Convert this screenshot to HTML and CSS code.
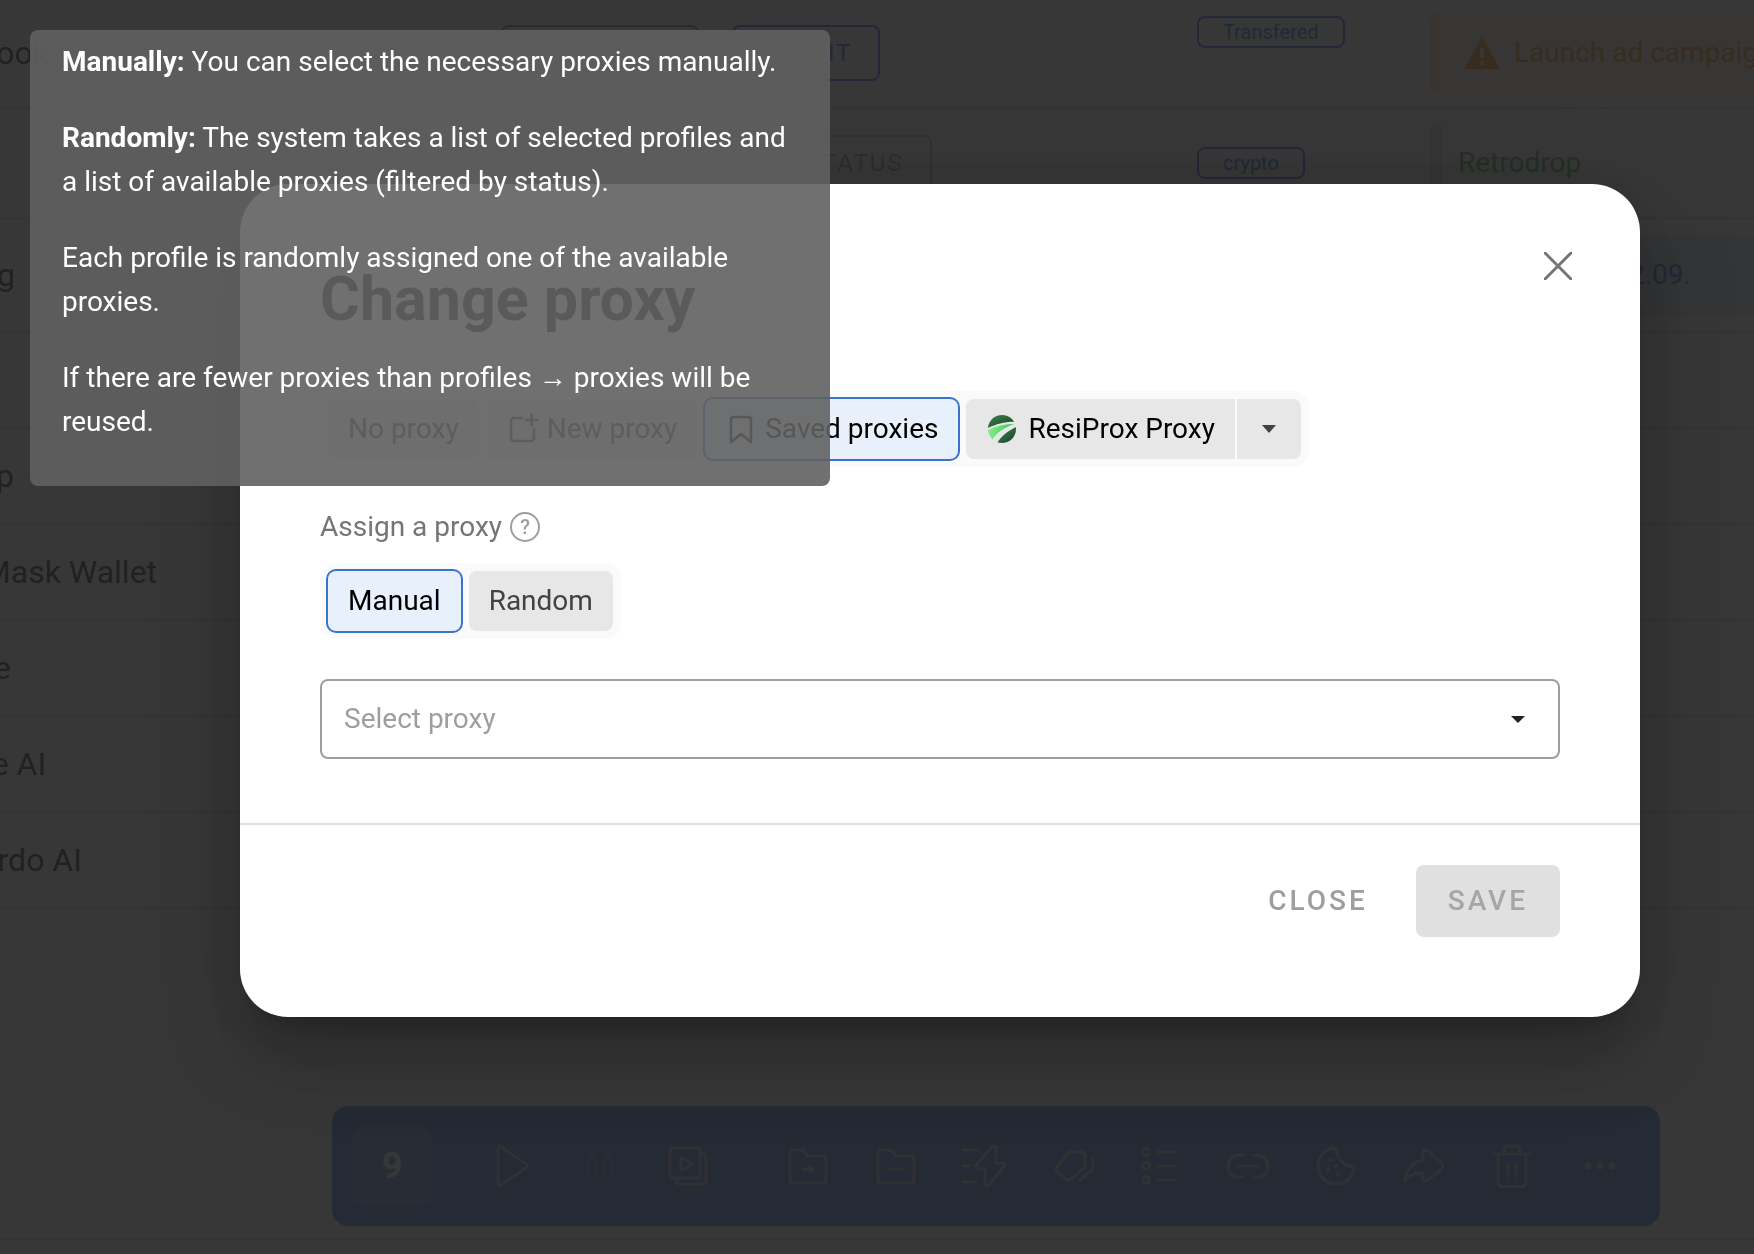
FILE: index.html
```html
<!DOCTYPE html>
<html lang="en">
<head>
    <meta charset="UTF-8">
    <title>Change proxy</title>
    <meta name="viewport" content="width=device-width, initial-scale=1">
    <link rel="stylesheet" href="styles.css">
</head>
<body>
    <div class="page">
        <main class="profiles">
            <table class="profiles-table">
                <colgroup>
                    <col class="col-name">
                    <col class="col-action">
                    <col class="col-status">
                    <col class="col-tags">
                    <col class="col-note">
                </colgroup>
                <tbody>
                    <tr class="row-note">
                        <td>Facebook</td>
                        <td><button class="action action-start"><svg viewBox="0 0 16 20"><path d="M2 2v16l12-8z"/></svg>START</button></td>
                        <td><button class="action action-blue">REDDIT</button></td>
                        <td class="tags-top"><span class="chip">Transfered</span></td>
                        <td>
                            <div class="note note-orange">
                                <svg class="note-icon" viewBox="0 0 36 32"><path fill-rule="evenodd" d="M18 0 36 32H0zM16 11v10h4V11zM16 24v4h4v-4z"/></svg>
                                Launch ad campaign
                            </div>
                        </td>
                    </tr>
                    <tr class="row-note">
                        <td></td>
                        <td><button class="action action-run"><svg viewBox="0 0 16 20"><path d="M2 2v16l12-8z"/></svg>START</button></td>
                        <td><button class="action">NO STATUS</button></td>
                        <td><span class="chip">crypto</span></td>
                        <td><div class="note note-green">Retrodrop</div></td>
                    </tr>
                    <tr class="row-tall">
                        <td>Testing</td>
                        <td></td>
                        <td></td>
                        <td></td>
                        <td><div class="note note-blue">Warm up till 12.09.</div></td>
                    </tr>
                    <tr><td></td><td></td><td></td><td></td><td></td></tr>
                    <tr><td>Airdrop</td><td></td><td></td><td></td><td></td></tr>
                    <tr><td>MetaMask Wallet</td><td></td><td></td><td></td><td></td></tr>
                    <tr><td>Google</td><td></td><td></td><td></td><td></td></tr>
                    <tr><td>Claude AI</td><td></td><td></td><td></td><td></td></tr>
                    <tr><td>Leonardo AI</td><td></td><td></td><td></td><td></td></tr>
                </tbody>
            </table>
        </main>

        <div class="toolbar">
            <span class="toolbar-count">9</span>
            <button class="tool" aria-label="Start">
                <svg viewBox="0 0 48 48"><path d="M10 6.500v35c0 2 1.500 2.500 3 1.500l25-17c1.500-1 1.500-3 0-4L13 5c-1.500-1-3-.5-3 1.500z"/></svg>
            </button>
            <button class="tool tool-off" aria-label="Pause">
                <svg viewBox="0 0 48 48"><rect x="13" y="12" width="6" height="24" rx="3"/><rect x="29" y="12" width="6" height="24" rx="3"/></svg>
            </button>
            <button class="tool" aria-label="Start all">
                <svg viewBox="0 0 48 48"><rect x="6" y="6" width="30" height="30" rx="3"/><path d="M38 12c3 0 4 1 4 4v23c0 2-1 3-3 3H16c-3 0-4-1-4-4M17 16v11c0 1 1 1.500 2 1l8-5c1-.7 1-1.300 0-2l-8-5c-1-.5-2 0-2 1z"/></svg>
            </button>
            <span class="toolbar-gap"></span>
            <button class="tool" aria-label="Move to folder">
                <svg viewBox="0 0 48 48"><path d="M6 11c0-2 1-3 3-3h9c1.500 0 2 .5 3 2l2 4h15c3 0 4 1 4 4v20c0 2-1 3-3 3H9c-2 0-3-1-3-3zM19 27h10M26 24l3 3-3 3z"/></svg>
            </button>
            <button class="tool" aria-label="Remove from folder">
                <svg viewBox="0 0 48 48"><path d="M6 11c0-2 1-3 3-3h9c1.500 0 2 .5 3 2l3 4h14c3 0 4 1 4 4v20c0 2-1 3-3 3H9c-2 0-3-1-3-3zM18 27h12"/></svg>
            </button>
            <button class="tool" aria-label="Automation">
                <svg viewBox="0 0 48 48"><path d="M3 8h15M3 24h7M3 40h13M17 22 32 5c2-2 4-1 4 1v15h7c2 0 3 1.500 1.500 3L29 43c-2 2-4 1-4-1V27h-7c-2.500 0-3-3-1-5z"/></svg>
            </button>
            <button class="tool" aria-label="Tags">
                <svg viewBox="0 0 48 48"><path d="M22 10h11c3 0 4 1 4 4v9c0 1-.5 2-1 3L23 37c-1.500 1.500-3.500 1.500-5 0L9 29c-1.500-1.500-1.500-2.500 0-4l11-14c.5-.7 1-1 2-1zM45 16v9c0 1-.5 2-1 3L32 38"/></svg>
            </button>
            <button class="tool" aria-label="Status list">
                <svg viewBox="0 0 48 48"><circle cx="10" cy="10" r="3.500"/><circle cx="10" cy="24" r="3.500"/><circle cx="10" cy="38" r="3.500"/><path d="M22 10h18M22 24h18M22 38h18"/></svg>
            </button>
            <button class="tool" aria-label="Proxy">
                <svg viewBox="0 0 48 48"><path d="M19 13h-4C8 13 4 18 4 24s4 11 11 11h4M30 13h3c7 0 11 5 11 11s-4 11-11 11h-3M14 24h20"/></svg>
            </button>
            <button class="tool" aria-label="Cookies">
                <svg viewBox="0 0 48 48"><path d="M24 6a18 18 0 1 0 18 19c-9 0-18-8-18-19z"/><path class="dots" d="M18 18h.1M24 24h.1M16 28h.1M26 32h.1"/></svg>
            </button>
            <button class="tool" aria-label="Share">
                <svg viewBox="0 0 48 48"><path d="M23 10c0-2 2-3 4-1.500l15 13c1.500 1.500 1.500 3.500 0 5l-15 12c-2 1.500-4 .5-4-1.500v-6c-7-1-13 2-18 8 1-11 8-20 18-21z"/></svg>
            </button>
            <button class="tool" aria-label="Delete">
                <svg viewBox="0 0 48 48"><path d="M6 12h36M16 11V8c0-2 1-4 4-4h8c3 0 4 2 4 4v3M10 13v26c0 4 2 5.500 5 5.500h18c3 0 5-1.500 5-5.500V13M20 23v11M28 23v11"/></svg>
            </button>
            <button class="tool" aria-label="More">
                <svg viewBox="0 0 48 48"><g class="solid"><circle cx="12" cy="24" r="3.500"/><circle cx="24" cy="24" r="3.500"/><circle cx="36" cy="24" r="3.500"/></g></svg>
            </button>
        </div>
        <footer class="page-footer"></footer>
    </div>

    <div class="overlay">
        <section class="dialog" role="dialog" aria-labelledby="dialog-title">
            <header class="dialog-header">
                <h1 id="dialog-title">Change proxy</h1>
                <button class="dialog-close" aria-label="Close dialog">
                    <svg viewBox="0 0 28 28"><path d="M1 1l26 26M27 1 1 27"/></svg>
                </button>
            </header>

            <div class="dialog-body">
                <div class="toggle">
                    <button class="toggle-item">No proxy</button>
                    <button class="toggle-item">
                        <svg class="line-icon" viewBox="0 0 32 32"><path d="M15 5H7C5 5 4 6 4 8v17c0 2 1 3 3 3h17c2 0 3-1 3-3v-9M19 7h11M24.500 1.500v11"/></svg>
                        New proxy
                    </button>
                    <button class="toggle-item active">
                        <svg class="line-icon" viewBox="0 0 32 32"><path d="M6 29V7c0-2 1-3 3-3h14c2 0 3 1 3 3v22l-10-8z"/></svg>
                        Saved proxies
                    </button>
                    <div class="toggle-split">
                        <button class="toggle-item strong">
                            <svg viewBox="0 0 32 32">
                                <defs>
                                    <clipPath id="ball"><circle cx="16" cy="16" r="14"/></clipPath>
                                    <linearGradient id="dark" x1="0" x2="1" y1="0" y2="1"><stop offset="0" stop-color="#3f8a50"/><stop offset="1" stop-color="#153c24"/></linearGradient>
                                    <linearGradient id="light" x1="0" x2="1"><stop offset="0" stop-color="#8cf08a"/><stop offset="1" stop-color="#3fc75c"/></linearGradient>
                                </defs>
                                <g clip-path="url(#ball)">
                                    <path fill="#e7e7e7" d="M0 0h32v32H0z"/>
                                    <path fill="url(#dark)" d="M0 0h32v9C20 8 10 11 0 16z"/>
                                    <path fill="url(#light)" d="M0 18C9 13 18 11 28 11 18 15 11 20 6 28L0 26z"/>
                                    <path fill="#e7e7e7" d="M6 27c5-8 12-12 21-15l5 0C21 17 14 23 10 30z"/>
                                    <path fill="url(#dark)" d="M10 32c4-8 11-14 22-19v19z"/>
                                </g>
                            </svg>
                            ResiProx Proxy
                        </button>
                        <button class="toggle-item toggle-more" aria-label="Other providers">
                            <svg class="caret" viewBox="0 0 14 8"><path d="M0 0h14L7 8z"/></svg>
                        </button>
                    </div>
                </div>

                <div class="field-label" id="assign-label">
                    Assign a proxy
                    <button class="help" aria-describedby="assign-tip">?</button>
                </div>
                <div class="toggle" role="group" aria-labelledby="assign-label">
                    <button class="toggle-item active">Manual</button>
                    <button class="toggle-item">Random</button>
                </div>

                <div class="select-box">
                    <select aria-label="Select proxy">
                        <option>Select proxy</option>
                    </select>
                    <svg class="caret" viewBox="0 0 14 7"><path d="M0 0h14L7 7z"/></svg>
                </div>
            </div>

            <footer class="dialog-footer">
                <button class="btn">CLOSE</button>
                <button class="btn btn-save" disabled>SAVE</button>
            </footer>
        </section>
    </div>

    <div class="tooltip" role="tooltip" id="assign-tip">
        <p><b>Manually:</b> You can select the necessary proxies manually.</p>
        <p><b>Randomly:</b> The system takes a list of selected profiles and a list of available proxies (filtered by status).</p>
        <p>Each profile is randomly assigned one of the available proxies.</p>
        <p>If there are fewer proxies than profiles → proxies will be reused.</p>
    </div>
</body>
</html>
```

FILE: styles.css
```css
* {
    box-sizing: border-box;
}

body {
    margin: 0;
    overflow: hidden;
    font-family: Roboto, "Liberation Sans", sans-serif;
    font-size: 28px;
    line-height: 44px;
    color: #212121;
    background: #fff;
}

button,
select {
    font: inherit;
    color: inherit;
    margin: 0;
    padding: 0;
    border: none;
    background: none;
}

svg {
    display: block;
    flex: none;
}

/* profile list under the overlay */
.page {
    display: flex;
    flex-direction: column;
    height: 100vh;
}

.profiles {
    flex: 1;
    min-height: 0;
    overflow: hidden;
}

/* the list is scrolled sideways */
.profiles-table {
    table-layout: fixed;
    width: calc(100% + 300px);
    margin-top: -1px;
    margin-left: -106px;
    border-spacing: 0;
    font-size: 32px;
}

.col-name { width: 591px; }
.col-action { width: 231px; }
.col-status { width: 465px; }
.col-tags { width: 233px; }

.profiles-table td {
    height: 96px;
    padding: 0 16px;
    border-bottom: 2px solid #e0e0e0;
    white-space: nowrap;
}

.profiles-table .row-note td {
    height: 110px;
}

.profiles-table .row-tall td {
    height: 114px;
}

.profiles-table .tags-top {
    padding-top: 17px;
    vertical-align: top;
}

.action {
    display: flex;
    align-items: center;
    height: 56px;
    padding: 0 26px;
    border: 2px solid #bdbdbd;
    border-radius: 8px;
    font-size: 24px;
    letter-spacing: 2px;
    color: #9e9e9e;
}

.action svg {
    width: 16px;
    height: 20px;
    fill: none;
    stroke: currentColor;
    stroke-width: 2;
}

.action-start,
.action-run {
    justify-content: center;
    gap: 20px;
    width: 198px;
}

.action-start {
    border-color: #4caf50;
    color: #4caf50;
}

.action-blue {
    border-color: #2a6cf0;
    color: #2a6cf0;
}

.chip {
    display: block;
    width: fit-content;
    padding: 0 24px;
    border: 2px solid #2a6cf0;
    border-radius: 8px;
    font-size: 20px;
    line-height: 28px;
    color: #2a6cf0;
}

.note {
    display: flex;
    align-items: center;
    gap: 14px;
    height: 80px;
    padding-left: 16px;
    border-left: 12px solid;
    border-radius: 8px;
    font-size: 28px;
}

.note-icon {
    width: 36px;
    height: 32px;
    margin-left: 6px;
    fill: currentColor;
}

.note-orange {
    color: #fb8c00;
    background: #fff1e0;
    border-color: #ffe0c0;
}

.note-green {
    color: #4caf50;
    background: #f9fcf9;
    border-color: #d8efd9;
}

.note-blue {
    color: #2a6cf0;
    background: #dbe8fb;
    border-color: #b5cff5;
}

.toolbar {
    display: flex;
    align-items: center;
    margin: 0 94px 12px 332px;
    padding: 20px 16px 20px 20px;
    border-radius: 16px;
    background: #4a84e0;
    color: #fff;
}

.toolbar-count {
    flex: none;
    width: 80px;
    margin-right: 36px;
    border-radius: 12px;
    background: rgba(255, 255, 255, 0.12);
    font-size: 36px;
    font-weight: 700;
    line-height: 80px;
    text-align: center;
}

.toolbar-gap {
    width: 32px;
}

.tool {
    display: flex;
    justify-content: center;
    flex: 0 1 88px;
    opacity: 0.6;
}

.tool-off {
    opacity: 0.15;
}

.tool svg {
    width: 48px;
    height: 48px;
    fill: none;
    stroke: #f0ecd0;
    stroke-width: 3;
    stroke-linecap: round;
    stroke-linejoin: round;
}

.tool .solid {
    fill: #f0ecd0;
    stroke: none;
}

.tool .dots {
    stroke-width: 4;
}

.page-footer {
    height: 16px;
    border-top: 2px solid #e0e0e0;
}

/* dialog */
.overlay {
    position: fixed;
    inset: 0;
    padding: 184px 114px 0 240px;
    background: rgba(33, 33, 33, 0.9);
}

.dialog {
    border-radius: 48px;
    background: #fff;
    box-shadow: 0 22px 30px -14px rgba(0, 0, 0, 0.2), 0 48px 76px 6px rgba(0, 0, 0, 0.14), 0 18px 92px 16px rgba(0, 0, 0, 0.12);
}

.dialog-header {
    display: flex;
    justify-content: space-between;
    align-items: flex-start;
    padding: 48px 48px 0 80px;
}

.dialog-header h1 {
    margin: 32px 0 0;
    font-size: 61px;
    line-height: 71px;
}

.dialog-close {
    display: flex;
    align-items: center;
    justify-content: center;
    width: 68px;
    height: 68px;
}

.dialog-close svg {
    width: 28px;
    height: 28px;
    stroke: #757575;
    stroke-width: 3;
    stroke-linecap: round;
}

.dialog-body {
    padding: 56px 80px 64px;
}

.toggle {
    display: flex;
    gap: 8px;
    width: fit-content;
    padding: 8px;
    border-radius: 16px;
    background: #fafafa;
}

.toggle-split {
    display: flex;
    gap: 2px;
}

.toggle-item {
    display: flex;
    align-items: center;
    gap: 8px;
    height: 60px;
    padding: 0 20px;
    border-radius: 8px;
    background: #e7e7e7;
    color: #424242;
    white-space: nowrap;
}

.toggle-item svg {
    width: 32px;
    height: 32px;
}

.toggle-item.active {
    background: #e8f0fb;
    color: #000;
    box-shadow: 0 0 0 2px #3873cd;
}

.toggle-item.strong {
    gap: 10px;
    color: #000;
    border-radius: 8px 0 0 8px;
}

.toggle-more {
    justify-content: center;
    width: 64px;
    border-radius: 0 8px 8px 0;
}

.toggle-item .caret {
    width: 14px;
    height: 8px;
    fill: #424242;
}

.line-icon {
    fill: none;
    stroke: currentColor;
    stroke-width: 2.5;
    stroke-linecap: round;
    stroke-linejoin: round;
}

.field-label {
    display: flex;
    align-items: center;
    gap: 8px;
    margin: 38px 0 14px;
    color: #757575;
}

.help {
    width: 30px;
    height: 30px;
    border: 2px solid #9e9e9e;
    border-radius: 50%;
    font-size: 20px;
    font-weight: 500;
    line-height: 26px;
    color: #9e9e9e;
}

.select-box {
    display: flex;
    align-items: center;
    position: relative;
    margin-top: 40px;
}

.select-box select {
    width: 100%;
    height: 80px;
    padding: 0 72px 0 22px;
    border: 2px solid #9e9e9e;
    border-radius: 8px;
    appearance: none;
    color: #9e9e9e;
}

.select-box .caret {
    position: absolute;
    right: 35px;
    width: 14px;
    height: 7px;
    fill: #212121;
    pointer-events: none;
}

.dialog-footer {
    display: flex;
    justify-content: flex-end;
    gap: 16px;
    padding: 40px 80px 80px;
    border-top: 2px solid #e0e0e0;
}

.btn {
    height: 72px;
    padding: 0 32px;
    border-radius: 8px;
    font-weight: 500;
    letter-spacing: 3px;
    color: #9e9e9e;
}

.btn-save {
    background: #e0e0e0;
    color: #a6a6a6;
}

/* help text over everything */
.tooltip {
    position: fixed;
    top: 30px;
    left: 30px;
    width: 800px;
    padding: 10px 32px;
    border-radius: 8px;
    background: rgba(97, 97, 97, 0.9);
    color: #fff;
}

.tooltip p {
    margin: 0 0 32px;
}
```
